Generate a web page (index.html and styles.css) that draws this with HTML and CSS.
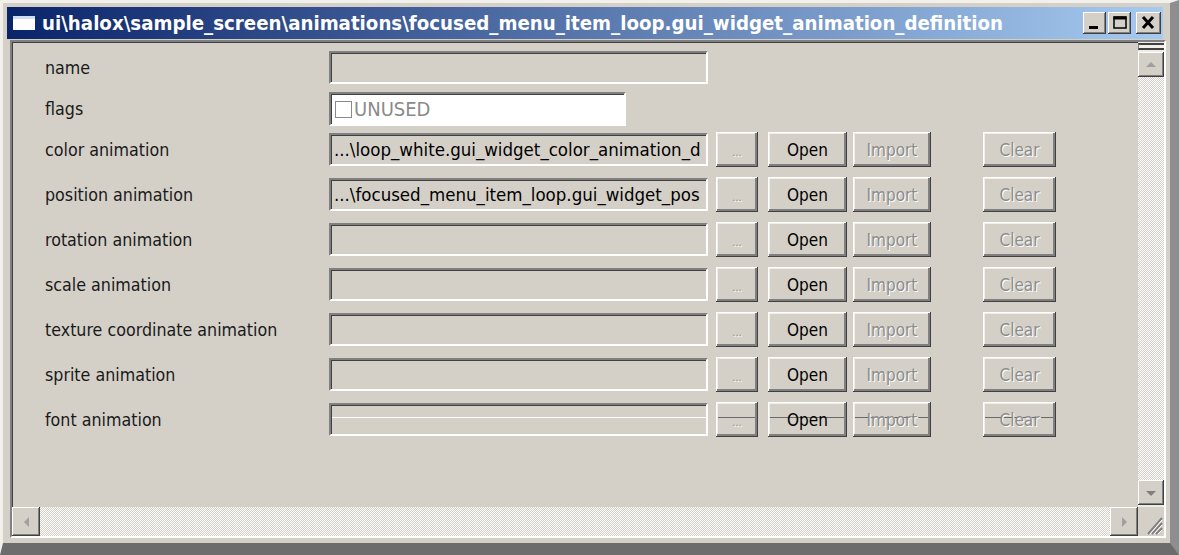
FILE: index.html
```html
<!DOCTYPE html>
<html>
<head>
<meta charset="utf-8">
<link rel="stylesheet" href="styles.css">
</head>
<body>
<div class="window">
  <div class="titlebar">
    <span class="app-icon"></span>
    <span class="title">ui\halox\sample_screen\animations\focused_menu_item_loop.gui_widget_animation_definition</span>
    <div class="caption-buttons">
      <span class="cap cap-min"><svg width="23" height="22" viewBox="0 0 23 22"><rect x="6" y="14" width="9" height="3" fill="#000"/></svg></span>
      <span class="cap cap-max"><svg width="23" height="22" viewBox="0 0 23 22"><rect x="6" y="5" width="12" height="11" fill="none" stroke="#000" stroke-width="1.5"/><rect x="5.5" y="4.5" width="13" height="3" fill="#000"/></svg></span>
      <span class="cap cap-close"><svg width="25" height="22" viewBox="0 0 25 22"><path d="M7 5 L17 16 M17 5 L7 16" stroke="#000" stroke-width="3"/></svg></span>
    </div>
  </div>
  <div class="client">
    <div class="form">
      <div class="row row-name">
        <span class="label">name</span>
        <div class="field"></div>
      </div>
      <div class="row row-flags">
        <span class="label">flags</span>
        <div class="field field-flags"><span class="checkbox"></span><span class="unused">UNUSED</span></div>
      </div>
      <div class="row row-first">
        <span class="label">color animation</span>
        <div class="field">...\loop_white.gui_widget_color_animation_d</div>
        <span class="btn btn-dots disabled">...</span>
        <span class="btn btn-open">Open</span>
        <span class="btn btn-import disabled">Import</span>
        <span class="btn btn-clear disabled">Clear</span>
      </div>
      <div class="row">
        <span class="label">position animation</span>
        <div class="field">...\focused_menu_item_loop.gui_widget_pos</div>
        <span class="btn btn-dots disabled">...</span>
        <span class="btn btn-open">Open</span>
        <span class="btn btn-import disabled">Import</span>
        <span class="btn btn-clear disabled">Clear</span>
      </div>
      <div class="row">
        <span class="label">rotation animation</span>
        <div class="field"></div>
        <span class="btn btn-dots disabled">...</span>
        <span class="btn btn-open">Open</span>
        <span class="btn btn-import disabled">Import</span>
        <span class="btn btn-clear disabled">Clear</span>
      </div>
      <div class="row">
        <span class="label">scale animation</span>
        <div class="field"></div>
        <span class="btn btn-dots disabled">...</span>
        <span class="btn btn-open">Open</span>
        <span class="btn btn-import disabled">Import</span>
        <span class="btn btn-clear disabled">Clear</span>
      </div>
      <div class="row">
        <span class="label">texture coordinate animation</span>
        <div class="field"></div>
        <span class="btn btn-dots disabled">...</span>
        <span class="btn btn-open">Open</span>
        <span class="btn btn-import disabled">Import</span>
        <span class="btn btn-clear disabled">Clear</span>
      </div>
      <div class="row">
        <span class="label">sprite animation</span>
        <div class="field"></div>
        <span class="btn btn-dots disabled">...</span>
        <span class="btn btn-open">Open</span>
        <span class="btn btn-import disabled">Import</span>
        <span class="btn btn-clear disabled">Clear</span>
      </div>
      <div class="row row-glitch">
        <span class="label">font animation</span>
        <div class="field"></div>
        <span class="btn btn-dots disabled">...</span>
        <span class="btn btn-open">Open</span>
        <span class="btn btn-import disabled">Import</span>
        <span class="btn btn-clear disabled">Clear</span>
      </div>
    </div>
    <div class="vscroll">
      <div class="vthumb"></div>
      <div class="sbtn sbtn-v"><svg width="14" height="10" viewBox="0 0 14 10"><polygon points="7,2 12,7 2,7" fill="#a0a0a0"/></svg></div>
      <div class="track"></div>
      <div class="sbtn sbtn-v"><svg width="14" height="10" viewBox="0 0 14 10"><polygon points="2,3 12,3 7,8" fill="#808080"/></svg></div>
    </div>
    <div class="hscroll">
      <div class="sbtn sbtn-h"><svg width="10" height="14" viewBox="0 0 10 14"><polygon points="3,7 8,2 8,12" fill="#a0a0a0"/></svg></div>
      <div class="track"></div>
      <div class="sbtn sbtn-h"><svg width="10" height="14" viewBox="0 0 10 14"><polygon points="3,2 8,7 3,12" fill="#a0a0a0"/></svg></div>
    </div>
    <div class="grip"><svg width="26" height="29" viewBox="0 0 26 29"><path d="M24 11 L10 27 M24 16 L14 27 M24 21 L18 27" stroke="#808080" stroke-width="2"/><path d="M24 13 L12 27 M24 18 L16 27 M24 23 L20 27" stroke="#ffffff" stroke-width="1"/></svg></div>
  </div>
</div>
</body>
</html>
```

FILE: styles.css
```css
* { box-sizing: border-box; }

html, body {
  margin: 0;
  padding: 0;
}

body {
  width: 1179px;
  height: 555px;
  overflow: hidden;
  background: #808080;
  font-family: "DejaVu Sans Condensed", "DejaVu Sans", sans-serif;
  font-stretch: condensed;
}

.window {
  width: 1179px;
  height: 555px;
  background: #d4d0c8;
  border-top: 3px solid #f1f0ea;
  border-left: 3px solid #f1f0ea;
  border-right: 9px solid #8e8e8e;
  border-bottom: 12px solid #6c6c6c;
  padding: 4px 7px 5px 4px;
  display: flex;
  flex-direction: column;
}

.titlebar {
  height: 32px;
  flex: none;
  display: flex;
  align-items: center;
  background: linear-gradient(to right, #0a246a 0%, #a6caf0 100%);
  padding-left: 6px;
  padding-right: 2px;
}

.app-icon {
  width: 22px;
  height: 14px;
  background: #fdfdff;
  border-top: 3px solid #cfdcf2;
  flex: none;
}

.title {
  margin-left: 7px;
  color: #fff;
  font-weight: bold;
  font-size: 20.25px;
  white-space: nowrap;
}

.caption-buttons {
  margin-left: auto;
  display: flex;
  align-items: center;
}

.cap {
  display: block;
  height: 22px;
  background: #d4d0c8;
  box-shadow: inset -1px -1px 0 #404040, inset 1px 1px 0 #ffffff, inset -2px -2px 0 #808080;
}
.cap svg { display: block; }
.cap-min { width: 23px; }
.cap-max { width: 23px; margin-left: 2px; }
.cap-close { width: 25px; margin-left: 5px; }

.client {
  flex: 1;
  margin: 1px -3px 0 3px;
  border-style: solid;
  border-width: 2px;
  border-color: #808080 #ffffff #ffffff #808080;
  box-shadow: inset 1px 1px 0 #404040;
  display: grid;
  grid-template-columns: 1fr 26px;
  grid-template-rows: 1fr 29px;
  min-height: 0;
}

.form {
  padding: 9px 0 0 33px;
  overflow: hidden;
}

.row {
  display: flex;
  align-items: center;
  height: 35px;
  margin-top: 10px;
}
.row-name { height: 33px; margin-top: 0; }
.row-flags { height: 34px; margin-top: 8px; }
.row-first { margin-top: 6px; }

.label {
  width: 284px;
  flex: none;
  font-size: 17.7px;
  color: #1a1a1a;
}

.field {
  width: 379px;
  height: 33px;
  flex: none;
  background: #d4d0c8;
  border-style: solid;
  border-width: 2px;
  border-color: #808080 #ffffff #ffffff #808080;
  box-shadow: inset 1px 1px 0 #404040;
  font-size: 18.5px;
  color: #000;
  padding-left: 3px;
  display: flex;
  align-items: center;
  white-space: nowrap;
  overflow: hidden;
}

.field-flags {
  width: 297px;
  height: 34px;
  background: #ffffff;
}

.checkbox {
  width: 17px;
  height: 17px;
  border: 1px solid #8a8a8a;
  margin: 0 2px 0 1px;
  flex: none;
}

.unused {
  color: #8a8a8a;
  font-size: 20px;
}

.btn {
  display: flex;
  align-items: center;
  justify-content: center;
  height: 35px;
  flex: none;
  background: #d4d0c8;
  font-size: 17px;
  color: #000;
  box-shadow: inset -1px -1px 0 #404040, inset 1px 1px 0 #ffffff, inset -3px -3px 0 #808080, inset 2px 2px 0 #f0efea;
}

.btn.disabled {
  color: #8c8c8c;
  text-shadow: 1px 1px 0 #ffffff;
}

.btn-dots { width: 42px; margin-left: 8px; font-size: 11px; padding-top: 6px; color: #a8a8a8; }
.btn-open { width: 79px; margin-left: 10px; }
.btn-import { width: 78px; margin-left: 6px; }
.btn-clear { width: 73px; margin-left: 52px; }

.row-glitch .field {
  background: linear-gradient(to bottom, transparent 12px, #ffffff 12px, #ffffff 13px, transparent 13px), #d4d0c8;
}
.row-glitch .btn {
  background: linear-gradient(to bottom, transparent 15px, #6a6a6a 15px, #6a6a6a 16px, transparent 16px), #d4d0c8;
}

.track {
  flex: 1;
  background-color: #d4d0c8;
  background-image: repeating-conic-gradient(#ffffff 0 25%, #d4d0c8 0 50%);
  background-size: 2px 2px;
}

.vscroll {
  display: flex;
  flex-direction: column;
  background: #ecebe6;
}

.vthumb {
  height: 7px;
  margin-top: 1px;
  background: #f0efea;
  border-top: 2px solid #404040;
  border-bottom: 2px solid #404040;
  border-left: 1px solid #808080;
}

.sbtn {
  display: flex;
  align-items: center;
  justify-content: center;
  background: #d4d0c8;
  flex: none;
  box-shadow: inset -1px -1px 0 #404040, inset 1px 1px 0 #ffffff, inset -2px -2px 0 #808080;
}

.sbtn-v {
  height: 25px;
  margin-top: 2px;
}
.sbtn-v:last-child { margin-top: 0; margin-bottom: 2px; }

.hscroll {
  display: flex;
}

.sbtn-h {
  width: 28px;
}

.grip {
  background: #d4d0c8;
}
.grip svg { display: block; }
```
